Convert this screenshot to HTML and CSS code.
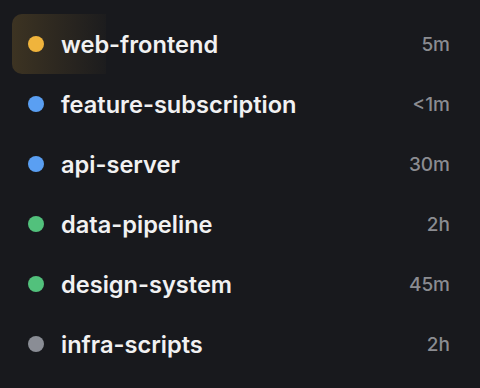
FILE: index.html
```html
<!DOCTYPE html>
<html>
<head>
<meta charset="utf-8">
<link rel="stylesheet" href="styles.css">
</head>
<body>
<ul class="list">
  <li class="row active"><span class="dot amber"></span><span class="name">web-frontend</span><span class="time">5m</span></li>
  <li class="row"><span class="dot blue"></span><span class="name">feature-subscription</span><span class="time">&lt;1m</span></li>
  <li class="row"><span class="dot blue"></span><span class="name">api-server</span><span class="time">30m</span></li>
  <li class="row"><span class="dot green"></span><span class="name">data-pipeline</span><span class="time">2h</span></li>
  <li class="row"><span class="dot green"></span><span class="name">design-system</span><span class="time">45m</span></li>
  <li class="row"><span class="dot gray"></span><span class="name">infra-scripts</span><span class="time">2h</span></li>
</ul>
</body>
</html>
```
FILE: styles.css
```css
html, body {
  margin: 0;
  padding: 0;
  background: #18191d;
  width: 480px;
  height: 388px;
  overflow: hidden;
}
.list {
  list-style: none;
  margin: 0;
  padding: 14px 12px;
  display: flex;
  flex-direction: column;
}
.row {
  height: 60px;
  display: flex;
  align-items: center;
  padding: 0 18px 0 16px;
  border-radius: 10px;
}
.row.active {
  background-image: linear-gradient(90deg, rgba(240, 180, 60, 0.17) 0%, rgba(240, 180, 60, 0.02) 100%);
  background-size: 94px 100%;
  background-repeat: no-repeat;
}
.dot {
  width: 16px;
  height: 16px;
  border-radius: 50%;
  flex: none;
  margin-right: 17px;
}
.amber { background: #f0b43c; }
.blue { background: #5a9ff2; }
.green { background: #52c17c; }
.gray { background: #8a8d95; }
.name {
  flex: 1;
  font-family: Inter, "Noto Sans", sans-serif;
  font-weight: 600;
  font-size: 23.6px;
  color: #f1f1f2;
}
.time {
  font-family: Inter, "Noto Sans", sans-serif;
  font-weight: 500;
  font-size: 19px;
  color: #8b8c91;
}
```
